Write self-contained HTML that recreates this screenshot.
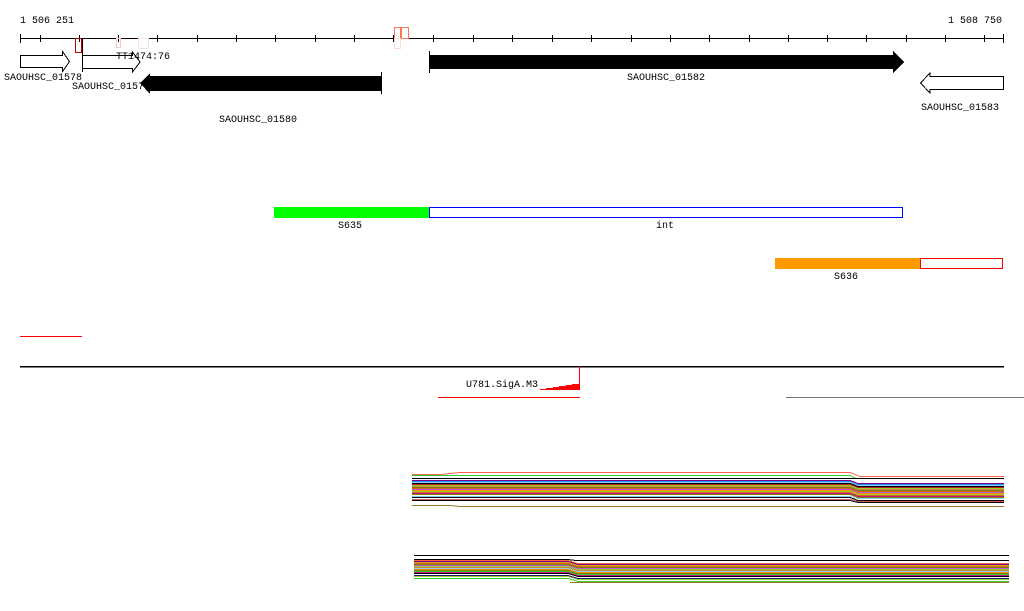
<!DOCTYPE html>
<html><head><meta charset="utf-8"><style>
html,body{margin:0;padding:0;background:#fff;width:1024px;height:611px;overflow:hidden}
svg{display:block}
text{font-family:"Liberation Mono","DejaVu Sans Mono",monospace;font-size:10px;fill:#000}
</style></head><body>
<svg width="1024" height="611" viewBox="0 0 1024 611" xmlns="http://www.w3.org/2000/svg" shape-rendering="crispEdges">
<!-- ruler -->
<text x="20" y="23">1 506 251</text>
<text x="1002" y="23" text-anchor="end">1 508 750</text>
<line x1="20" y1="38.5" x2="1004" y2="38.5" stroke="#000"/>
<g stroke="#000">
<line x1="20.5" y1="34" x2="20.5" y2="43"/><line x1="40.5" y1="35" x2="40.5" y2="42"/><line x1="79.5" y1="35" x2="79.5" y2="42"/><line x1="118.5" y1="35" x2="118.5" y2="42"/><line x1="157.5" y1="35" x2="157.5" y2="42"/><line x1="197.5" y1="35" x2="197.5" y2="42"/><line x1="236.5" y1="35" x2="236.5" y2="42"/><line x1="275.5" y1="35" x2="275.5" y2="42"/><line x1="315.5" y1="35" x2="315.5" y2="42"/><line x1="354.5" y1="35" x2="354.5" y2="42"/><line x1="393.5" y1="35" x2="393.5" y2="42"/><line x1="433.5" y1="35" x2="433.5" y2="42"/><line x1="473.5" y1="35" x2="473.5" y2="42"/><line x1="512.5" y1="35" x2="512.5" y2="42"/><line x1="552.5" y1="35" x2="552.5" y2="42"/><line x1="591.5" y1="35" x2="591.5" y2="42"/><line x1="631.5" y1="35" x2="631.5" y2="42"/><line x1="670.5" y1="35" x2="670.5" y2="42"/><line x1="709.5" y1="35" x2="709.5" y2="42"/><line x1="749.5" y1="35" x2="749.5" y2="42"/><line x1="788.5" y1="35" x2="788.5" y2="42"/><line x1="827.5" y1="35" x2="827.5" y2="42"/><line x1="866.5" y1="35" x2="866.5" y2="42"/><line x1="906.5" y1="35" x2="906.5" y2="42"/><line x1="945.5" y1="35" x2="945.5" y2="42"/><line x1="984.5" y1="35" x2="984.5" y2="42"/><line x1="1003.5" y1="34" x2="1003.5" y2="43"/>
</g>
<!-- small marker rects -->
<rect x="75.5" y="38.5" width="6" height="14" fill="none" stroke="#b00"/>
<rect x="116.5" y="38.5" width="4" height="9" fill="none" stroke="#fcc"/>
<rect x="138.5" y="38.5" width="10" height="10" fill="none" stroke="#fdd"/>
<rect x="394.5" y="27.5" width="6" height="11" fill="none" stroke="#f75"/>
<rect x="401.5" y="27.5" width="7" height="11" fill="none" stroke="#f75"/>
<rect x="394.5" y="38.5" width="6" height="10" fill="none" stroke="#fdc"/>
<!-- genes -->
<path d="M20.5 55.5H62.5V51.5L69.5 61.5L62.5 71.5V67.5H20.5Z" fill="#fff" stroke="#000"/>
<line x1="82.5" y1="38" x2="82.5" y2="72" stroke="#000"/>
<path d="M82.5 55.5H132.5V52L140 62L132.5 72V68.5H82.5Z" fill="#fff" stroke="#000"/>
<text x="116" y="59">TT1474:76</text>
<text x="4" y="80">SAOUHSC_01578</text>
<text x="72" y="89">SAOUHSC_0157</text>
<path d="M140 83L150 73V76H381V91H150V94Z" fill="#000"/>
<line x1="381.5" y1="72" x2="381.5" y2="94" stroke="#000"/>
<text x="258" y="122" text-anchor="middle">SAOUHSC_01580</text>
<line x1="429.5" y1="51" x2="429.5" y2="73" stroke="#000"/>
<path d="M429 55H893V51L904 62L893 73V69H429Z" fill="#000"/>
<text x="666" y="80" text-anchor="middle">SAOUHSC_01582</text>
<path d="M1003.5 76.5H930V73L920.5 83L930 93V89.5H1003.5Z" fill="#fff" stroke="#000"/>
<text x="960" y="110" text-anchor="middle">SAOUHSC_01583</text>
<!-- bars -->
<rect x="274" y="207" width="155" height="11" fill="#0f0"/>
<rect x="429.5" y="207.5" width="473" height="10" fill="#fff" stroke="#00f"/>
<text x="350" y="228" text-anchor="middle">S635</text>
<text x="665" y="228" text-anchor="middle">int</text>
<rect x="775" y="258" width="145" height="11" fill="#f90"/>
<rect x="920.5" y="258.5" width="82" height="10" fill="#fff" stroke="#f00"/>
<text x="846" y="279" text-anchor="middle">S636</text>
<!-- lines -->
<line x1="20" y1="336.5" x2="82" y2="336.5" stroke="#f00"/>
<rect x="20" y="366" width="984" height="1.5" fill="#000"/>
<line x1="579.5" y1="366" x2="579.5" y2="390" stroke="#f00"/>
<path d="M540 390V389H546V388H553V387H559V386H566V385H572V384H579V390Z" fill="#f00"/>
<text x="466" y="387">U781.SigA.M3</text>
<line x1="438" y1="397.5" x2="580" y2="397.5" stroke="#f00"/>
<line x1="786" y1="397.5" x2="1024" y2="397.5" stroke="#777"/>
<!-- bundle 1 -->
<g fill="none" stroke-width="1">
<polyline points="412,474.5 440,474.5 460,472.5 850,472.5 860,476.5 1004,476.5" stroke="#ff6347"/>
<polyline points="412,475.5 850,475.5 856,478.5 1004,478.5" stroke="#32cd32"/>
<polyline points="412,478.5 1004,478.5" stroke="#000"/>
<polyline points="412,480.5 850,480.5 858,483.5 1004,483.5" stroke="#800080"/>
<polyline points="412,481.5 850,481.5 858,484.5 1004,484.5" stroke="#1e90ff"/>
<polyline points="412,482.5 850,482.5 858,485.5 1004,485.5" stroke="#87cefa"/>
<polyline points="412,483.5 850,483.5 858,486.5 1004,486.5" stroke="#000"/>
<polyline points="412,484.5 850,484.5 858,487.5 1004,487.5" stroke="#b22222"/>
<polyline points="412,485.5 850,485.5 858,488.5 1004,488.5" stroke="#9acd32"/>
<polyline points="412,486.5 850,486.5 858,489.5 1004,489.5" stroke="#cd853f"/>
<polyline points="412,487.5 850,487.5 858,490.5 1004,490.5" stroke="#808000"/>
<polyline points="412,488.5 850,488.5 858,491.5 1004,491.5" stroke="#d2691e"/>
<polyline points="412,489.5 850,489.5 858,492.5 1004,492.5" stroke="#ba55d3"/>
<polyline points="412,490.5 850,490.5 858,493.5 1004,493.5" stroke="#ff8c00"/>
<polyline points="412,491.5 850,491.5 858,494.5 1004,494.5" stroke="#9acd32"/>
<polyline points="412,492.5 850,492.5 858,495.5 1004,495.5" stroke="#d2691e"/>
<polyline points="412,493.5 850,493.5 858,496.5 1004,496.5" stroke="#c71585"/>
<polyline points="412,494.5 850,494.5 858,497.5 1004,497.5" stroke="#808000"/>
<polyline points="412,496.5 850,496.5 858,498.5 1004,498.5" stroke="#87cefa"/>
<polyline points="412,497.5 850,497.5 858,500.5 1004,500.5" stroke="#000"/>
<polyline points="412,499.5 850,499.5 858,501.5 1004,501.5" stroke="#cd5c5c"/>
<polyline points="412,500.5 850,500.5 858,502.5 1004,502.5" stroke="#000"/>
<polyline points="412,505.5 450,505.5 460,506.5 1004,506.5" stroke="#9a7a2a"/>
</g>
<!-- bundle 2 -->
<g fill="none" stroke-width="1">
<polyline points="414,555.5 1009,555.5" stroke="#000"/>
<polyline points="414,559.5 568,559.5 576,560.5 1009,560.5" stroke="#000"/>
<polyline points="414,560.5 568,560.5 578,563.5 1009,563.5" stroke="#ff6347"/>
<polyline points="414,561.5 568,561.5 578,564.5 1009,564.5" stroke="#800080"/>
<polyline points="414,562.5 568,562.5 578,565.5 1009,565.5" stroke="#daa520"/>
<polyline points="414,563.5 568,563.5 578,566.5 1009,566.5" stroke="#d2691e"/>
<polyline points="414,564.5 568,564.5 578,567.5 1009,567.5" stroke="#808000"/>
<polyline points="414,565.5 568,565.5 578,568.5 1009,568.5" stroke="#ba55d3"/>
<polyline points="414,566.5 568,566.5 578,569.5 1009,569.5" stroke="#9acd32"/>
<polyline points="414,567.5 568,567.5 578,570.5 1009,570.5" stroke="#cd853f"/>
<polyline points="414,568.5 568,568.5 578,571.5 1009,571.5" stroke="#87cefa"/>
<polyline points="414,569.5 568,569.5 578,572.5 1009,572.5" stroke="#ff8c00"/>
<polyline points="414,570.5 568,570.5 578,573.5 1009,573.5" stroke="#808000"/>
<polyline points="414,571.5 568,571.5 578,574.5 1009,574.5" stroke="#32cd32"/>
<polyline points="414,572.5 568,572.5 578,575.5 1009,575.5" stroke="#c71585"/>
<polyline points="414,573.5 568,573.5 578,576.5 1009,576.5" stroke="#000"/>
<polyline points="414,575.5 568,575.5 578,578.5 1009,578.5" stroke="#191970"/>
<polyline points="414,576.5 568,576.5 578,579.5 1009,579.5" stroke="#9acd32"/>
<polyline points="414,578.5 568,578.5 578,581.5 1009,581.5" stroke="#32cd32"/>
<polyline points="570,582.5 1009,582.5" stroke="#9a7a2a"/>
</g>
</svg>
</body></html>
